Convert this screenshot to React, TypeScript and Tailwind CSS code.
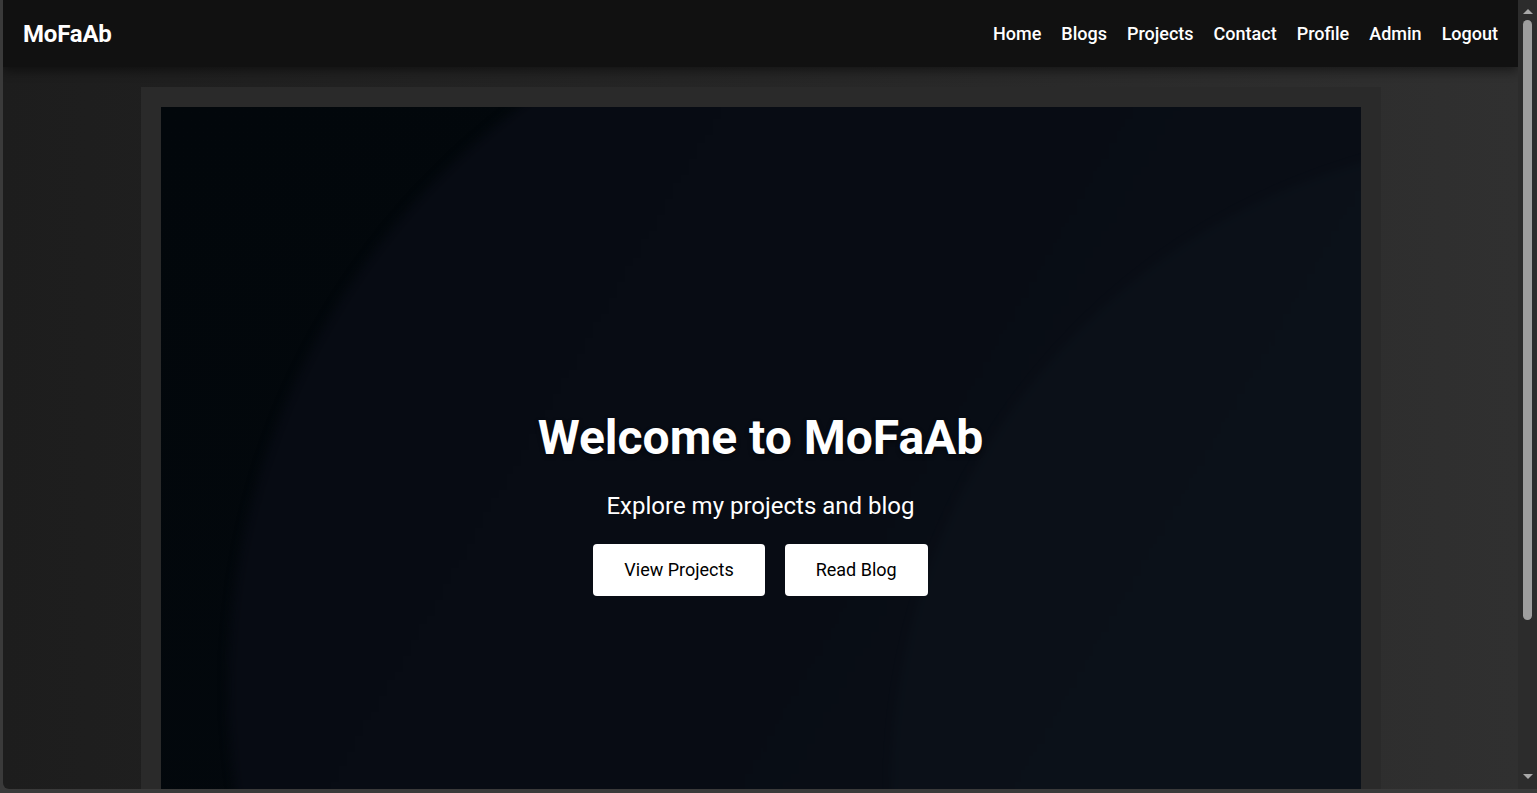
import React from "react";

const links = ["Home", "Blogs", "Projects", "Contact", "Profile", "Admin", "Logout"];

const Navbar = () => (
  <nav className="flex h-[67px] shrink-0 items-center justify-between bg-[#111111] px-5 shadow-[0_4px_10px_rgba(0,0,0,0.45)] relative z-10">
    <span className="text-[24px] font-bold text-white tracking-[-0.2px]">MoFaAb</span>
    <ul className="flex items-center gap-5">
      {links.map((l) => (
        <li key={l} className="text-[18px] font-medium text-white">
          {l}
        </li>
      ))}
    </ul>
  </nav>
);

const Hero = () => (
  <section className="relative flex h-[791px] flex-col items-center justify-center overflow-hidden bg-[linear-gradient(160deg,#02070b_0%,#03080d_100%)]">
    {/* large lighter circle, leaves a darker wedge at top-left */}
    <div className="pointer-events-none absolute left-[67px] top-[-142px] h-[1442px] w-[1442px] rounded-full bg-[linear-gradient(120deg,#060a12_0%,#080c14_40%,#0b1119_100%)] blur-[5px]" />
    {/* faint arc on the right */}
    <div className="pointer-events-none absolute left-[730px] top-[30px] h-[1300px] w-[1300px] rounded-full bg-[#0e161e] opacity-40 blur-[4px]" />
    <div className="relative flex flex-col items-center">
      <h1 className="text-[48px] font-bold leading-[1.2] text-white [text-shadow:0_2px_4px_rgba(0,0,0,0.5)]">
        Welcome to MoFaAb
      </h1>
      <p className="mt-[21px] text-[24px] leading-[1.5] text-white">Explore my projects and blog</p>
      <div className="mt-5 flex gap-5">
        <button className="h-[52px] rounded bg-white px-[31px] text-[18px] text-black">View Projects</button>
        <button className="h-[52px] rounded bg-white px-[31px] text-[18px] text-black">Read Blog</button>
      </div>
    </div>
  </section>
);

const Scrollbar = () => (
  <div className="flex w-[19px] shrink-0 flex-col items-center bg-[#2c2c2c] pt-[9px] pb-[10px]">
    <div className="h-0 w-0 border-x-[5px] border-b-[5px] border-x-transparent border-b-[#a8a8a8]" />
    <div className="mt-[6px] h-[600px] w-[9px] rounded-full bg-[#9e9e9e]" />
    <div className="flex-1" />
    <div className="h-0 w-0 border-x-[5px] border-t-[5px] border-x-transparent border-t-[#a8a8a8]" />
  </div>
);

export default function App() {
  return (
    <div className="flex h-[793px] w-full flex-col overflow-hidden bg-[#3a3a3a] font-['Roboto',sans-serif]">
      <div className="flex min-h-0 flex-1 pl-[3px] pb-[4px]">
        <main className="flex min-w-0 flex-1 flex-col overflow-hidden rounded-bl-[6px] bg-[linear-gradient(90deg,#1d1d1d_0%,#262626_50%,#303030_100%)]">
          <Navbar />
          <div className="flex justify-center pt-5">
            <div className="w-[1240px] bg-[#2a2a2a] p-5">
              <Hero />
            </div>
          </div>
        </main>
        <Scrollbar />
      </div>
    </div>
  );
}
